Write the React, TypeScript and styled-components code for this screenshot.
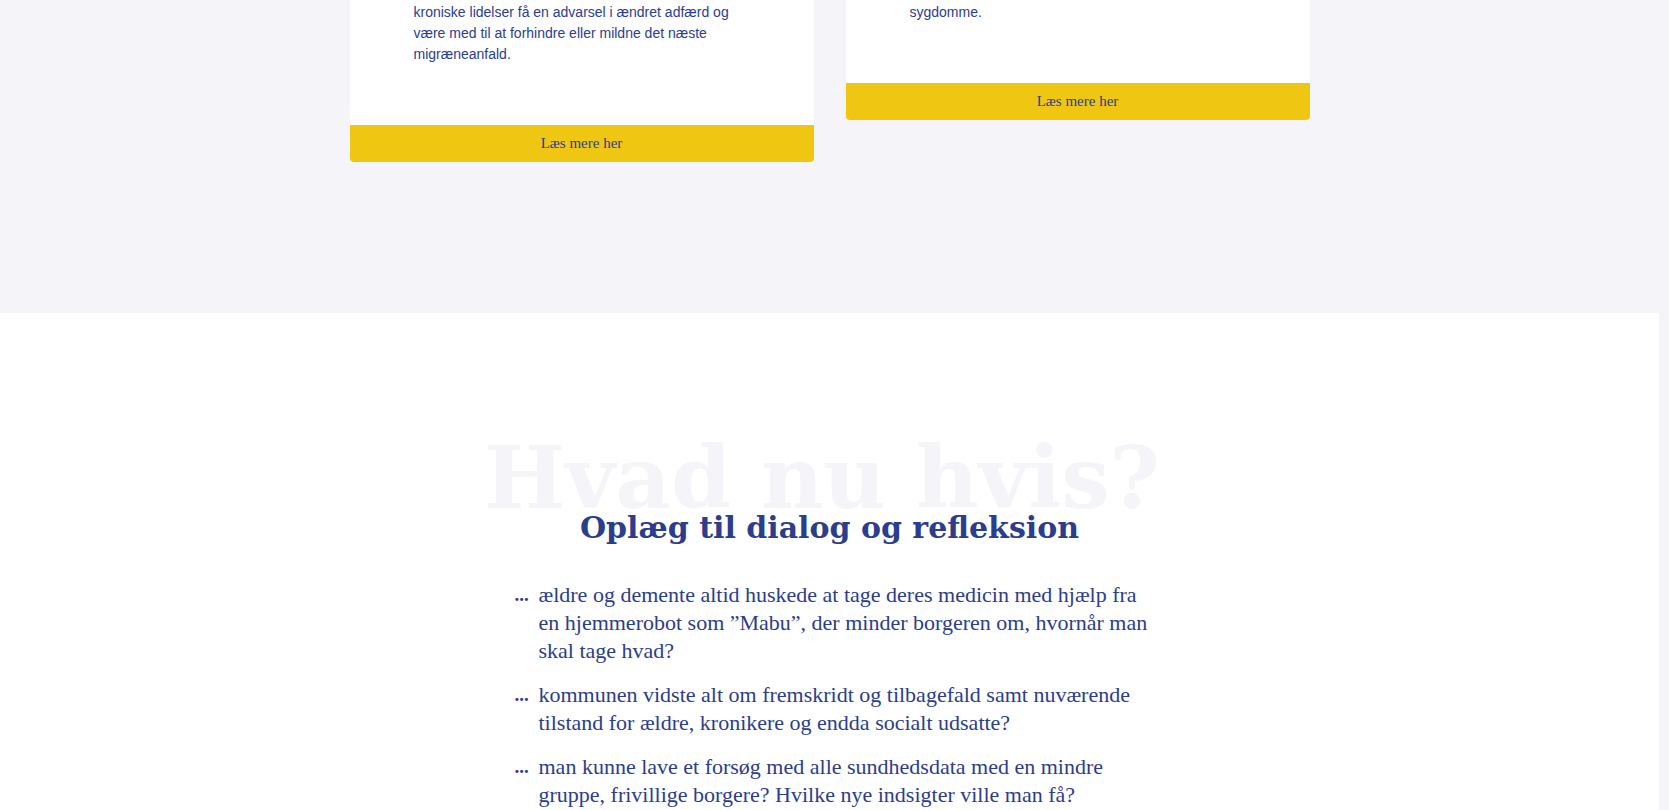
import React from 'react';
import styled, { createGlobalStyle } from 'styled-components';

const GlobalStyle = createGlobalStyle`
  html, body {
    margin: 0;
    padding: 0;
    background: #f4f4f9;
    overflow: hidden;
  }
`;

const BLUE = '#2b3d8d';
const SLAB = "'DejaVu Serif', 'Liberation Serif', serif";
const SERIF = "'Liberation Serif', 'Times New Roman', serif";

const Page = styled.div`
  width: calc(100% - 10px);
`;

const CardsSection = styled.section`
  background: #f4f4f9;
  padding-bottom: 151px;
`;

const CardsRow = styled.div`
  width: 960px;
  margin: -80px auto 0;
  display: flex;
  gap: 32px;
  align-items: flex-start;
`;

const Card = styled.article`
  width: 464px;
  background: #ffffff;
  border-radius: 4px;
  overflow: hidden;
  display: flex;
  flex-direction: column;
`;

const CardBody = styled.div`
  padding: 40px 64px 60px;
`;

const CardText = styled.p`
  margin: 0;
  font-family: 'Liberation Sans', Arial, sans-serif;
  font-size: 14px;
  line-height: 21px;
  color: ${BLUE};
  white-space: pre-line;
`;

const ReadMore = styled.a`
  display: block;
  height: 37px;
  line-height: 37px;
  background: #efc712;
  text-align: center;
  font-family: ${SERIF};
  font-size: 15px;
  color: ${BLUE};
  text-decoration: none;
  cursor: pointer;
`;

const DialogSection = styled.section`
  background: #ffffff;
  padding: 116px 0 80px;
`;

const DialogInner = styled.div`
  width: 630px;
  margin: 0 auto;
`;

const Ghost = styled.div`
  margin: 0 -92px 0 -107px;
  font-family: ${SLAB};
  font-weight: 700;
  font-size: 86px;
  line-height: 98px;
  color: #f4f4f9;
  text-align: center;
  white-space: nowrap;
  user-select: none;
`;

const Heading = styled.h2`
  margin: -17px 0 0;
  font-family: ${SLAB};
  font-weight: 700;
  font-size: 30px;
  line-height: 1.2;
  color: ${BLUE};
  text-align: center;
  white-space: nowrap;
  position: relative;
`;

const Questions = styled.ul`
  list-style: none;
  margin: 35px 0 0;
  padding: 0;
  display: flex;
  flex-direction: column;
  gap: 16px;
`;

const Question = styled.li`
  display: grid;
  grid-template-columns: 24px 1fr;
  font-family: ${SERIF};
  font-size: 22px;
  line-height: 28px;
  color: ${BLUE};
`;

const Dots = styled.span`
  font-weight: 700;
  font-size: 19px;
`;

const QuestionText = styled.span`
  white-space: pre;
`;

const cards = [
  {
    text:
      'Et AI-baseret system kan via sensorer i hjemmet\nlade borgere med migræne og andre\nkroniske lidelser få en advarsel i ændret adfærd og\nvære med til at forhindre eller mildne det næste\nmigræneanfald.',
  },
  {
    text:
      'En robot kan hjælpe ældre borgere med at huske\nmedicin og opdage tidlige tegn på begyndende\nsygdomme.',
  },
];

const questions = [
  'ældre og demente altid huskede at tage deres medicin med hjælp fra\nen hjemmerobot som ”Mabu”, der minder borgeren om, hvornår man\nskal tage hvad?',
  'kommunen vidste alt om fremskridt og tilbagefald samt nuværende\ntilstand for ældre, kronikere og endda socialt udsatte?',
  'man kunne lave et forsøg med alle sundhedsdata med en mindre\ngruppe, frivillige borgere? Hvilke nye indsigter ville man få?',
];

export default function App() {
  return (
    <Page>
      <GlobalStyle />
      <CardsSection>
        <CardsRow>
          {cards.map((card, idx) => (
            <Card key={`card-${idx}`}>
              <CardBody>
                <CardText>{card.text}</CardText>
              </CardBody>
              <ReadMore>Læs mere her</ReadMore>
            </Card>
          ))}
        </CardsRow>
      </CardsSection>

      <DialogSection>
        <DialogInner>
          <Ghost aria-hidden="true">Hvad nu hvis?</Ghost>
          <Heading>Oplæg til dialog og refleksion</Heading>
          <Questions>
            {questions.map((q, idx) => (
              <Question key={`q-${idx}`}>
                <Dots>...</Dots>
                <QuestionText>{q}</QuestionText>
              </Question>
            ))}
          </Questions>
        </DialogInner>
      </DialogSection>
    </Page>
  );
}
